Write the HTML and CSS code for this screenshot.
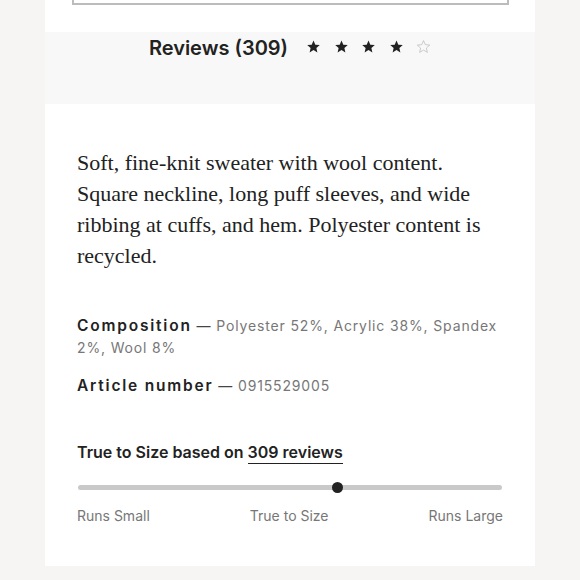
FILE: index.html
```html
<!DOCTYPE html>
<html>
<head>
<meta charset="utf-8">
<link rel="stylesheet" href="styles.css">
</head>
<body>
<div class="page">
  <div class="top-card">
    <div class="top-box"></div>
  </div>
  <div class="reviews">
    <span class="reviews-title">Reviews (309)</span>
    <span class="stars">
      <svg class="star" viewBox="0 0 24 24"><path d="M12 2.5l2.9 6.6 7.1.6-5.4 4.7 1.6 7-6.2-3.7-6.2 3.7 1.6-7L2 9.7l7.1-.6z"/></svg>
      <svg class="star" viewBox="0 0 24 24"><path d="M12 2.5l2.9 6.6 7.1.6-5.4 4.7 1.6 7-6.2-3.7-6.2 3.7 1.6-7L2 9.7l7.1-.6z"/></svg>
      <svg class="star" viewBox="0 0 24 24"><path d="M12 2.5l2.9 6.6 7.1.6-5.4 4.7 1.6 7-6.2-3.7-6.2 3.7 1.6-7L2 9.7l7.1-.6z"/></svg>
      <svg class="star" viewBox="0 0 24 24"><path d="M12 2.5l2.9 6.6 7.1.6-5.4 4.7 1.6 7-6.2-3.7-6.2 3.7 1.6-7L2 9.7l7.1-.6z"/></svg>
      <svg class="star empty" viewBox="0 0 24 24"><path d="M12 2.5l2.9 6.6 7.1.6-5.4 4.7 1.6 7-6.2-3.7-6.2 3.7 1.6-7L2 9.7l7.1-.6z"/></svg>
    </span>
  </div>
  <div class="details">
    <p class="desc">Soft, fine-knit sweater with wool content. Square neckline, long puff sleeves, and wide ribbing at cuffs, and hem. Polyester content is recycled.</p>
    <p class="attr"><span class="attr-name">Composition</span> <span class="attr-dash">—</span> <span class="attr-value">Polyester 52%, Acrylic 38%, Spandex 2%, Wool 8%</span></p>
    <p class="attr attr-last"><span class="attr-name">Article number</span> <span class="attr-dash">—</span> <span class="attr-value">0915529005</span></p>
    <p class="fit-title">True to Size based on <span class="fit-link">309 reviews</span></p>
    <div class="fit-track">
      <div class="fit-knob" style="left: 61.2%"></div>
    </div>
    <div class="fit-labels">
      <span>Runs Small</span>
      <span>True to Size</span>
      <span>Runs Large</span>
    </div>
  </div>
</div>
</body>
</html>
```
FILE: styles.css
```css
html, body {
  margin: 0;
  padding: 0;
}
body {
  background: #f6f5f4;
  font-family: "Inter", "Lato", sans-serif;
  color: #222;
  height: 580px;
  overflow: hidden;
}
.page {
  width: 490px;
  margin: 0 auto;
}
.top-card {
  background: #fff;
  height: 32px;
  padding: 0 26px 0 27px;
}
.top-box {
  height: 3px;
  border: 2px solid #bcbcbc;
  border-top: none;
}
.reviews {
  background: #f9f8f8;
  height: 72px;
  display: flex;
  justify-content: center;
  align-items: flex-start;
  padding-top: 4px;
  box-sizing: border-box;
}
.reviews-title {
  font-size: 20px;
  font-weight: 600;
  color: #222;
  line-height: 24px;
}
.stars {
  display: flex;
  gap: 12.5px;
  margin-left: 18px;
  margin-top: 3px;
}
.star {
  width: 15px;
  height: 15px;
  fill: #222;
}
.star.empty {
  fill: none;
  stroke: #bbb;
  stroke-width: 1.2;
}
.details {
  background: #fff;
  height: 462px;
  padding: 0 32px 0 32px;
  box-sizing: border-box;
  overflow: hidden;
}
.desc {
  margin: 0;
  padding-top: 43px;
  font-family: "Liberation Serif", serif;
  font-size: 22px;
  line-height: 31px;
  color: #222;
}
.attr {
  margin: 44px 0 0 0;
  font-size: 14px;
  line-height: 22px;
  letter-spacing: 0.85px;
}
.attr-last {
  margin-top: 16px;
}
.attr-name {
  font-weight: 600;
  font-size: 15.5px;
  color: #222;
  letter-spacing: 1.8px;
}
.attr-dash {
  color: #444;
}
.attr-value {
  color: #777;
}
.fit-title {
  margin: 44px 0 0 0;
  font-size: 16px;
  font-weight: 600;
  line-height: 22px;
  color: #222;
}
.fit-link {
  border-bottom: 1.5px solid #222;
  padding-bottom: 1px;
}
.fit-track {
  position: relative;
  margin: 22px 1px 0 1px;
  height: 5px;
  border-radius: 3px;
  background: #c9c9c9;
}
.fit-knob {
  position: absolute;
  top: -3px;
  width: 11px;
  height: 11px;
  margin-left: -5.5px;
  border-radius: 50%;
  background: #222;
}
.fit-labels {
  display: flex;
  justify-content: space-between;
  margin-top: 17px;
  font-size: 14px;
  color: #777;
}
```
